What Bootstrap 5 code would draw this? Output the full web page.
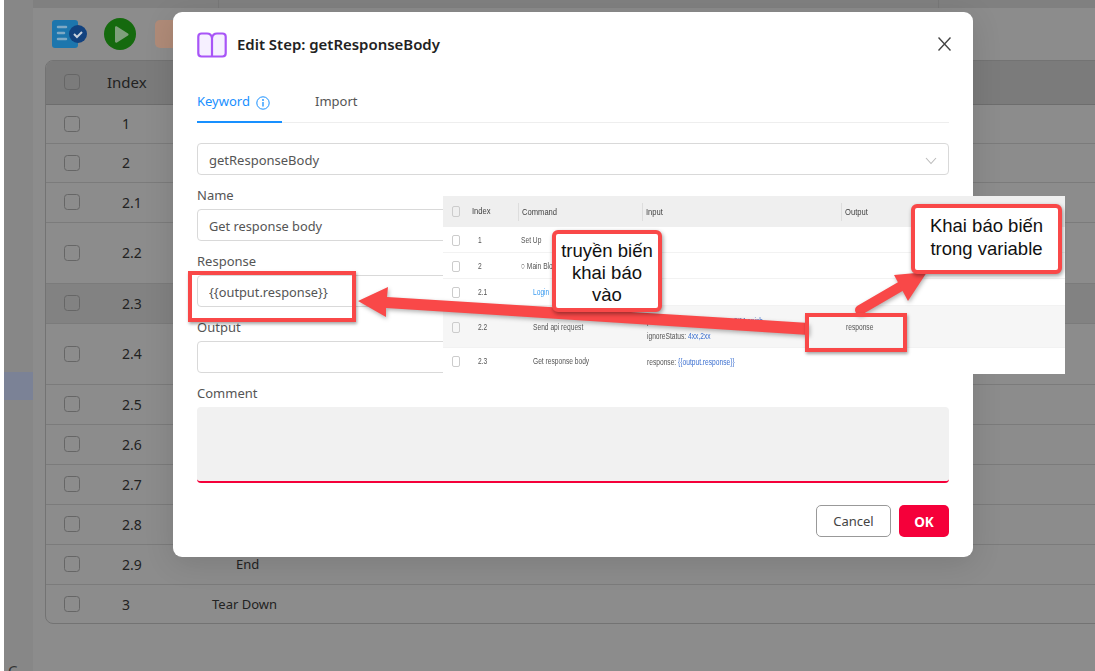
<!DOCTYPE html>
<html lang="vi">
<head>
    <meta charset="UTF-8">
    <meta name="viewport" content="width=device-width, initial-scale=1.0">
    <title>Edit Step</title>
    <link href="https://cdn.jsdelivr.net/npm/bootstrap@5.3.0/dist/css/bootstrap.min.css" rel="stylesheet">
    <style>
        html, body { height: 100%; overflow: hidden; }
        body { background: #fff; font-family: "Noto Sans", sans-serif; font-size: 14px; color: #222; }
        .app-frame { margin-left: 4px; height: 671px; background: #8c8c8c; overflow: hidden; }
        .side-bar { width: 29px; flex: none; background: #878787; padding-top: 372px; position: relative; }
        .side-active { height: 28px; background: #7b8296; }
        .side-c { position: absolute; left: 4px; bottom: -7px; font-size: 15px; color: #333; line-height: 1; }
        .page-main { flex: 1; min-width: 0; }
        .top-band { height: 8px; background: #808080; }
        .band-cell { border-right: 1px solid #787878; }
        .band-a { width: 186px; }
        .band-b { width: 720px; }
        .tool-row { height: 52px; padding-left: 19px; gap: 16px; }
        .tool-orange { width: 30px; height: 28px; border-radius: 5px; background: #b08b78; margin-left: 3px; }
        .step-wrap { margin: 0 -20px 0 12px; border: 1px solid #737373; border-radius: 8px; overflow: hidden; height: 564px; }
        .step-table { --bs-table-bg: transparent; --bs-table-color: #222; table-layout: fixed; margin: 0; width: 100%; }
        .step-table th, .step-table td { padding: 0; vertical-align: middle; border-bottom: 1px solid #7b7b7b; font-weight: 400; }
        .step-table tr:last-child td { border-bottom: 0; }
        .step-table th { background: #7b7b7b; font-size: 15px; border-bottom-color: #6d6d6d; }
        .step-table .row-hl td { background: #828282; }
        .col-check { width: 61px; padding-left: 18px !important; }
        .col-index { width: 105px; }
        .idx-val { padding-left: 15px !important; }
        .cmd-top { padding-left: 0 !important; font-size: 13px; }
        .cmd-sub { padding: 2px 0 0 24px !important; font-size: 13px; }
        .step-check { width: 16px; height: 16px; margin: 0; display: block; background-color: transparent; border: 1px solid #666; border-radius: 4px; }

        .edit-dialog { position: absolute; left: 173px; top: 12px; width: 800px; height: 545px; padding: 0 24px; border: 0; border-radius: 9px; background: #fff; box-shadow: 0 6px 30px rgba(0,0,0,.12); color: #333; }
        .dlg-head { height: 66px; padding-top: 20px; }
        .dlg-title { font-size: 14.95px; font-weight: 600; color: #222; margin: 4px 0 0 10px; }
        .dlg-close { margin: 5px -2px 0 auto; background: none; border: 0; padding: 0; line-height: 0; }
        .dlg-tabs { height: 45px; border-bottom: 1px solid #eee; gap: 33px; }
        .dlg-tab { color: #555; padding: 14px 0 0; height: 45px; font-size: 13px; }
        .dlg-tab.on { color: #1890ff; border-bottom: 2px solid #1890ff; width: 85px; gap: 6px; }
        .dlg-select { height: 32px; margin-top: 20px; border: 1px solid #d9d9d9; border-radius: 4px; padding: 3px 11px 0; font-size: 13px; color: #555; }
        .fld-label { margin: 10px 0 0; font-size: 13px; line-height: 20px; height: 24px; color: #555; }
        .fld-input { height: 32px; padding: 1px 11px 0; border: 1px solid #d9d9d9; border-radius: 4px; font-size: 12.8px; color: #555; }
        .fld-area { height: 76px; background: #f1f1f1; border: 0; border-bottom: 2px solid #f5003a; border-radius: 4px; resize: none; }
        .dlg-foot { margin-top: 22px; gap: 8px; }
        .btn-cancel { width: 75px; height: 32px; padding: 2px 0 0; font-size: 13px; color: #444; border: 1px solid #999; border-radius: 5px; background: #fff; }
        .btn-ok { width: 50px; height: 32px; padding: 2px 0 0; font-size: 13.5px; font-weight: 700; color: #fff; border: 0; border-radius: 5px; background: #f5003a; }

        .shot-box { position: absolute; left: 443px; top: 196px; width: 622px; height: 178px; background: #fff; font-family: "Liberation Sans", sans-serif; font-size: 9.5px; color: #555; overflow: hidden; }
        .shot-row { display: grid; grid-template-columns: 29px 46px 124px 199px 1fr; align-items: center; border-bottom: 1px solid #f2f2f2; height: 26px; padding-top: 1px; white-space: nowrap; }
        .shot-row.head { height: 31px; padding-top: 0; background: #efefef; color: #444; border: 0; }
        .shot-row.head > div + div + div { border-left: 1px solid #ddd; padding-left: 3px; height: 18px; line-height: 18px; }
        .shot-row.r-tall { height: 42px; background: #f6f6f6; padding-top: 2px; }
        .shot-row.r-mid { height: 27px; }
        .shot-txt { display: inline-block; transform: scaleX(.7); transform-origin: left center; }
        .head .shot-txt { transform: scaleX(.8); }
        .shot-check { width: 8px; height: 11px; border: 1px solid #ccc; border-radius: 2px; margin-left: 9px; }
        .shot-idx { padding-left: 6px; }
        .shot-cmd { padding-left: 3px; }
        .shot-sub { padding-left: 15px; }
        .shot-input { padding-left: 5px; line-height: 15px; }
        .shot-out { padding-left: 5px; }
        .shot-blue { color: #3b6fd0; }
        .shot-link { color: #3a9bf0; }

        .arrow-layer { position: absolute; left: 0; top: 0; width: 1095px; height: 671px; pointer-events: none; filter: drop-shadow(1px 2px 2px rgba(0,0,0,.3)); }
        .mark-box { position: absolute; border: 4px solid #f94848; box-shadow: 1px 2px 3px rgba(0,0,0,.35); }
        .mark-input { left: 188px; top: 271px; width: 168px; height: 51px; }
        .mark-output { left: 805px; top: 313px; width: 102px; height: 39px; }
        .call-box { position: absolute; background: #fff; border: 4px solid #f94848; border-radius: 6px; box-shadow: 1px 2px 4px rgba(0,0,0,.4); font-family: "Liberation Sans", sans-serif; font-size: 18.5px; line-height: 22px; color: #111; text-align: center; }
        .call-one { left: 552px; top: 230px; width: 110px; height: 82px; padding-top: 6px; }
        .call-two { left: 911px; top: 204px; width: 151px; height: 70px; padding-top: 6px; line-height: 23px; }
    </style>
</head>
<body>
    <div class="app-frame d-flex">
        <div class="side-bar">
            <div class="side-active"></div>
            <span class="side-c">C</span>
        </div>
        <div class="page-main">
            <div class="top-band d-flex">
                <div class="band-cell band-a"></div>
                <div class="band-cell band-b"></div>
            </div>
            <div class="tool-row d-flex align-items-center">
                <svg width="36" height="30" viewBox="0 0 36 30">
                    <rect x="0" y="1" width="26" height="28" rx="3" fill="#1d76ad"/>
                    <path d="M6 8h8M6 14h6M6 20h8" stroke="#7fa9c4" stroke-width="2.5" stroke-linecap="round"/>
                    <circle cx="26" cy="15" r="9" fill="#12427f"/>
                    <path d="M22 15l3 3 5-5" fill="none" stroke="#c9d2dd" stroke-width="2"/>
                </svg>
                <svg width="32" height="32" viewBox="0 0 32 32">
                    <circle cx="16" cy="16" r="16" fill="#156a0e"/>
                    <path d="M11 9.500c0-1 1-1.500 2-1l11 7c.8.500.8 1.500 0 2l-11 7c-1 .500-2 0-2-1z" fill="#7f9f7c"/>
                </svg>
                <div class="tool-orange"></div>
            </div>
            <div class="step-wrap">
                <table class="table step-table">
                    <colgroup><col class="col-check"><col class="col-index"><col></colgroup>
                    <thead>
                        <tr style="height:43px">
                            <th class="col-check"><input class="form-check-input step-check" type="checkbox"></th>
                            <th>Index</th>
                            <th></th>
                        </tr>
                    </thead>
                    <tbody id="stepRows"></tbody>
                </table>
            </div>
        </div>
    </div>

    <div class="card edit-dialog">
        <div class="dlg-head d-flex align-items-start">
            <svg width="30" height="26" viewBox="0 0 30 26">
                <path d="M15 6C14.500 3 12.500 1.500 10 1.500H4.500C2.500 1.500 1.300 2.700 1.300 4.700V21.300C1.300 23.300 2.500 24.500 4.500 24.500H25.500C27.500 24.500 28.700 23.300 28.700 21.300V4.700C28.700 2.700 27.500 1.500 25.500 1.500H20C17.500 1.500 15.500 3 15 6ZM15 6V24.500" fill="#f6f0ff" stroke="#a855f7" stroke-width="2.200" stroke-linejoin="round"/>
            </svg>
            <h5 class="dlg-title">Edit Step: getResponseBody</h5>
            <button class="dlg-close" type="button" aria-label="Close">
                <svg width="13" height="14" viewBox="0 0 13 14"><path d="M.5.500l12 13M12.500.500l-12 13" stroke="#444" stroke-width="1.400"/></svg>
            </button>
        </div>
        <div class="dlg-tabs d-flex">
            <div class="dlg-tab on d-flex">
                <span>Keyword</span>
                <svg width="14" height="14" viewBox="0 0 14 14" class="mt-1"><circle cx="7" cy="7" r="6.200" fill="none" stroke="#1890ff"/><path d="M7 6v4.500" stroke="#1890ff" stroke-width="1.300"/><circle cx="7" cy="4" r=".9" fill="#1890ff"/></svg>
            </div>
            <div class="dlg-tab">Import</div>
        </div>
        <div class="dlg-select d-flex align-items-center justify-content-between">
            <span>getResponseBody</span>
            <svg width="12" height="8" viewBox="0 0 12 8"><path d="M1 1l5 5.500L11 1" fill="none" stroke="#bbb" stroke-width="1.100"/></svg>
        </div>
        <div class="fld-label">Name</div>
        <input class="form-control fld-input" type="text" value="Get response body">
        <div class="fld-label">Response</div>
        <input class="form-control fld-input" type="text" value="{{output.response}}">
        <div class="fld-label">Output</div>
        <input class="form-control fld-input" type="text">
        <div class="fld-label">Comment</div>
        <textarea class="form-control fld-area"></textarea>
        <div class="dlg-foot d-flex justify-content-end">
            <button class="btn btn-cancel" type="button">Cancel</button>
            <button class="btn btn-ok" type="button">OK</button>
        </div>
    </div>

    <div class="shot-box">
        <div class="shot-row head"><div><div class="shot-check"></div></div><div><span class="shot-txt">Index</span></div><div><span class="shot-txt">Command</span></div><div><span class="shot-txt">Input</span></div><div><span class="shot-txt">Output</span></div></div>
        <div class="shot-row"><div><div class="shot-check"></div></div><div class="shot-idx"><span class="shot-txt">1</span></div><div class="shot-cmd"><span class="shot-txt">Set Up</span></div><div></div><div></div></div>
        <div class="shot-row"><div><div class="shot-check"></div></div><div class="shot-idx"><span class="shot-txt">2</span></div><div class="shot-cmd"><span class="shot-txt">&#9675; Main Block</span></div><div></div><div></div></div>
        <div class="shot-row r-mid"><div><div class="shot-check"></div></div><div class="shot-idx"><span class="shot-txt">2.1</span></div><div class="shot-sub shot-link"><span class="shot-txt">Login</span></div><div></div><div></div></div>
        <div class="shot-row r-tall"><div><div class="shot-check"></div></div><div class="shot-idx"><span class="shot-txt">2.2</span></div><div class="shot-sub"><span class="shot-txt">Send api request</span></div><div class="shot-input"><span class="shot-txt">path: <span class="shot-blue">/api/service/sim/Create-SIM.apish</span></span><br><span class="shot-txt">ignoreStatus: <span class="shot-blue">4xx,2xx</span></span></div><div class="shot-out"><span class="shot-txt">response</span></div></div>
        <div class="shot-row" style="border:0"><div><div class="shot-check"></div></div><div class="shot-idx"><span class="shot-txt">2.3</span></div><div class="shot-sub"><span class="shot-txt">Get response body</span></div><div class="shot-input"><span class="shot-txt">response: <span class="shot-blue">{{output.response}}</span></span></div><div></div></div>
    </div>

    <svg class="arrow-layer" viewBox="0 0 1095 671">
        <polygon points="358,301 388,287 387,297 809,323 809,335 386,308 386,317" fill="#f94848"/>
        <path d="M860 310L903 285" stroke="#f94848" stroke-width="10" stroke-linecap="round"/>
        <polygon points="927,272 894,275 908,301" fill="#f94848"/>
    </svg>
    <div class="mark-box mark-input"></div>
    <div class="mark-box mark-output"></div>
    <div class="call-box call-one">truyền biến<br>khai báo<br>vào</div>
    <div class="call-box call-two">Khai báo biến<br>trong variable</div>

    <script src="https://cdn.jsdelivr.net/npm/bootstrap@5.3.0/dist/js/bootstrap.bundle.min.js"></script>
    <script>
        // [index, command, row height, class for command cell]
        // rows 1 to 2.8 have their command hidden under the dialog
        let steps = [
            ["1", "", 39, "cmd-top"],
            ["2", "", 39, "cmd-top"],
            ["2.1", "", 40, "cmd-sub"],
            ["2.2", "", 61, "cmd-sub"],
            ["2.3", "", 40, "cmd-sub"],
            ["2.4", "", 61, "cmd-sub"],
            ["2.5", "", 40, "cmd-sub"],
            ["2.6", "", 40, "cmd-sub"],
            ["2.7", "", 40, "cmd-sub"],
            ["2.8", "", 40, "cmd-sub"],
            ["2.9", "End", 40, "cmd-sub"],
            ["3", "Tear Down", 40, "cmd-top"]
        ];
        document.getElementById("stepRows").innerHTML = steps.map(s => `
            <tr style="height:${s[2]}px" class="${s[0] === "2.3" ? "row-hl" : ""}">
                <td class="col-check"><input class="form-check-input step-check" type="checkbox"></td>
                <td class="idx-val">${s[0]}</td>
                <td class="${s[3]}">${s[1]}</td>
            </tr>`).join("");
    </script>
</body>
</html>
